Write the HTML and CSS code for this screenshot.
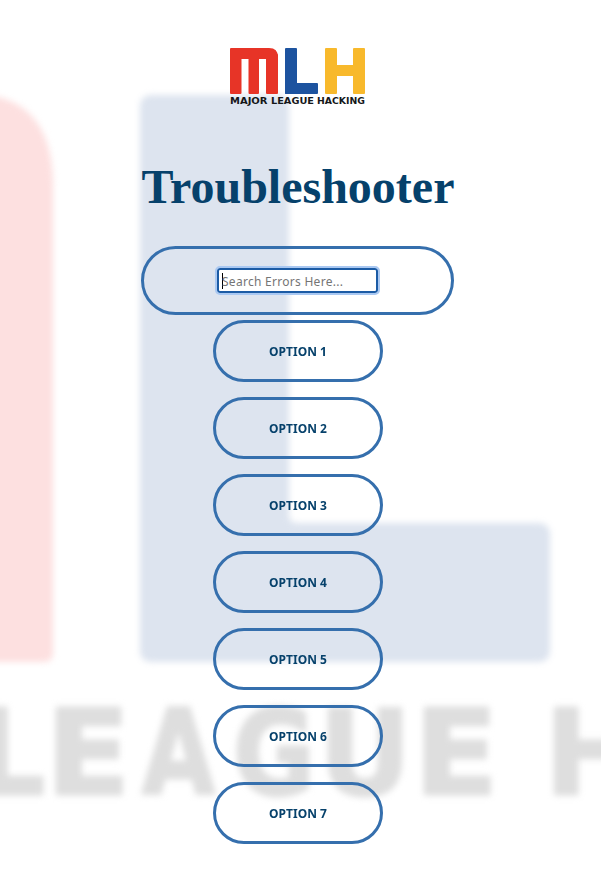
FILE: index.html
```html
<!DOCTYPE html>
<html lang="en">
<head>
<meta charset="utf-8">
<title>Troubleshooter</title>
<link rel="stylesheet" href="styles.css">
</head>
<body>
<svg class="backdrop" viewBox="-20 0 641 878" aria-hidden="true">
  <path class="wash-red" d="M-160 94H-29Q53 94 53 186V653Q53 662 44 662H-160Z"/>
  <path class="wash-blue" d="M152 95H279Q289 95 289 105V515Q289 523 297 523H538Q550 523 550 535V650Q550 662 538 662H152Q140 662 140 650V107Q140 95 152 95Z"/>
  <g class="wash-text">
    <text x="-24" y="794" textLength="69" lengthAdjust="spacingAndGlyphs">L</text>
    <text x="46" y="794" textLength="84" lengthAdjust="spacingAndGlyphs">E</text>
    <text x="142" y="794" textLength="73" lengthAdjust="spacingAndGlyphs">A</text>
    <text x="233" y="794" textLength="82" lengthAdjust="spacingAndGlyphs">G</text>
    <text x="319" y="794" textLength="92" lengthAdjust="spacingAndGlyphs">U</text>
    <text x="414" y="794" textLength="84" lengthAdjust="spacingAndGlyphs">E</text>
    <text x="545" y="794" textLength="96" lengthAdjust="spacingAndGlyphs">H</text>
  </g>
</svg>
<main class="page">
  <svg class="logo" viewBox="0 0 136 58" role="img" aria-label="MLH">
    <g class="logo-red">
      <path d="M1 0H39Q48 0 48 9V11H0V1Q0 0 1 0Z"/>
      <rect y="6" width="11.5" height="40" rx="1"/>
      <rect x="18.500" y="6" width="10.500" height="40" rx="1"/>
      <rect x="36" y="6" width="12" height="40" rx="1"/>
    </g>
    <g class="logo-blue">
      <rect x="55" width="12" height="46" rx="1"/>
      <rect x="55" y="35" width="33" height="11" rx="1"/>
    </g>
    <g class="logo-gold">
      <rect x="95" width="12" height="46" rx="1"/>
      <rect x="123" width="12" height="46" rx="1"/>
      <rect x="100" y="17" width="30" height="11"/>
    </g>
    <g class="logo-text">
      <text x="0" y="56" textLength="37.500" lengthAdjust="spacingAndGlyphs">MAJOR</text>
      <text x="41" y="56" textLength="43" lengthAdjust="spacingAndGlyphs">LEAGUE</text>
      <text x="87" y="56" textLength="48" lengthAdjust="spacingAndGlyphs">HACKING</text>
    </g>
  </svg>
  <h1 class="title">Troubleshooter</h1>
  <form class="search">
    <input class="search-input" type="text" placeholder="Search Errors Here..." autofocus>
  </form>
  <div class="options">
    <button class="option">OPTION 1</button>
    <button class="option">OPTION 2</button>
    <button class="option">OPTION 3</button>
    <button class="option">OPTION 4</button>
    <button class="option">OPTION 5</button>
    <button class="option">OPTION 6</button>
    <button class="option">OPTION 7</button>
  </div>
</main>
</body>
</html>
```
FILE: styles.css
```css
* { box-sizing: border-box; }
body { margin: 0; background: #fff; height: 878px; overflow: hidden; }
.backdrop { position: absolute; top: 0; left: -20px; width: 641px; height: 878px; z-index: -1; filter: blur(3px); }
.wash-red { fill: #fde0e0; }
.wash-blue { fill: #dde4ef; }
.wash-text { fill: #dedede; stroke: #dedede; stroke-width: 3px; stroke-linejoin: round; font: bold 118px "DejaVu Sans", sans-serif; }
.page { display: flex; flex-direction: column; align-items: center; padding: 48px 5px 0 0; }
.logo { width: 136px; height: 58px; display: block; }
.logo-red { fill: #e73427; }
.logo-blue { fill: #1d539f; }
.logo-gold { fill: #f8b92c; }
.logo-text { fill: #151719; font: bold 9px "DejaVu Sans", sans-serif; }
.title { margin: 53px 0 32px; font: bold 48px/55px "Liberation Serif", serif; color: #06416b; }
.search { display: flex; align-items: center; justify-content: center; width: 313px; height: 69px; margin: 0 1px 5px 0; border: 3px solid #356fad; border-radius: 35px; }
.search-input { width: 161px; height: 25px; padding: 1px 3px 0; border: 2px solid #1b5ba5; border-radius: 3px; background: linear-gradient(#000, #000) 3px 3px / 1px 16px no-repeat #fff; outline: 2px solid #a9c8f2; outline-offset: 0; font: 12px "Noto Sans", sans-serif; letter-spacing: .28px; caret-color: transparent; }
.search-input::placeholder { color: #757575; opacity: 1; }
.options { display: flex; flex-direction: column; gap: 15px; }
.option { width: 170px; height: 62px; padding: 0; border: 3px solid #356fad; border-radius: 31px; background: transparent; color: #06416b; font: bold 12px "Noto Sans", sans-serif; }
```
